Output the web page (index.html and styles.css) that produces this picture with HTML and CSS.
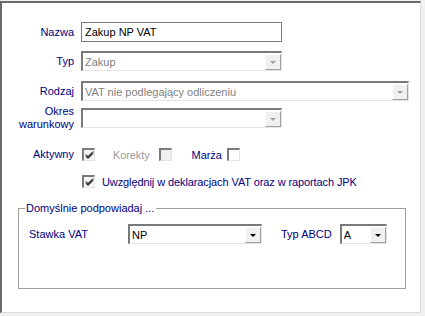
FILE: index.html
```html
<!DOCTYPE html>
<html lang="pl">
<head>
  <meta charset="UTF-8" />
  <title>Rejestr VAT</title>
  <link rel="stylesheet" href="styles.css">
</head>
<body>
  <div class="panel">
    <div class="row first">
      <label class="label">Nazwa</label>
      <div class="edit w-short">Zakup NP VAT</div>
    </div>

    <div class="row r-typ">
      <label class="label">Typ</label>
      <div class="combo w-short disabled">
        <span class="value">Zakup</span>
        <span class="drop"><i class="arrow"></i></span>
      </div>
    </div>

    <div class="row r-rodzaj">
      <label class="label">Rodzaj</label>
      <div class="combo w-long disabled">
        <span class="value">VAT nie podlegający odliczeniu</span>
        <span class="drop"><i class="arrow"></i></span>
      </div>
    </div>

    <div class="row r-okres">
      <label class="label two-line">Okres<br>warunkowy</label>
      <div class="combo w-short disabled">
        <span class="value"></span>
        <span class="drop"><i class="arrow"></i></span>
      </div>
    </div>

    <div class="row checks">
      <label class="label">Aktywny</label>
      <span class="check on"><svg width="9" height="9" viewBox="0 0 9 9"><path d="M1 3.5 L3 5.5 L8 0.5 M1 4.5 L3 6.5 L8 1.5 M1 5.5 L3 7.5 L8 2.5" stroke="#000" fill="none"/></svg></span>
      <span class="opt grey">Korekty</span>
      <span class="check off-disabled"></span>
      <span class="opt marza">Marża</span>
      <span class="check"></span>
    </div>

    <div class="row jpk">
      <span class="check on"><svg width="9" height="9" viewBox="0 0 9 9"><path d="M1 3.5 L3 5.5 L8 0.5 M1 4.5 L3 6.5 L8 1.5 M1 5.5 L3 7.5 L8 2.5" stroke="#000" fill="none"/></svg></span>
      <span class="opt">Uwzględnij w deklaracjach VAT oraz w raportach JPK</span>
    </div>

    <fieldset class="group">
      <legend>Domyślnie podpowiadaj ...</legend>
      <div class="group-row">
        <span class="g-label">Stawka VAT</span>
        <div class="combo w-stawka">
          <span class="value">NP</span>
          <span class="drop"><i class="arrow"></i></span>
        </div>
        <span class="g-label abcd">Typ ABCD</span>
        <div class="combo w-abcd">
          <span class="value">A</span>
          <span class="drop"><i class="arrow"></i></span>
        </div>
      </div>
    </fieldset>
  </div>
</body>
</html>
```

FILE: styles.css
```css
body, html {
  margin: 0;
  padding: 0;
  background: #f0f0f0;
  font-family: "Liberation Sans", Arial, sans-serif;
  font-size: 11px;
}

.panel {
  margin-top: 1px;
  width: 421px;
  height: 312px;
  box-sizing: border-box;
  background: #fff;
  border-style: solid;
  border-width: 2px 1px 1px 2px;
  border-color: #6a6a6a #dcdcdc #dcdcdc #6a6a6a;
}

.row {
  display: flex;
  align-items: center;
  height: 20px;
}
.first { margin-top: 19px; }
.r-typ { margin-top: 9px; }
.r-rodzaj { margin-top: 10px; }
.r-okres { margin-top: 7px; }
.checks { margin-top: 20px; height: 13px; }
.jpk { margin-top: 14px; height: 13px; padding-left: 80px; }

.label {
  width: 72px;
  margin-right: 7px;
  text-align: right;
  color: #000080;
  line-height: 13px;
}

.edit, .combo {
  box-sizing: border-box;
  height: 20px;
  background: #fff;
  border-style: solid;
  border-width: 2px 1px 1px 2px;
  border-color: #7a7a7a #e3e3e3 #e3e3e3 #7a7a7a;
  color: #000;
  line-height: 16px;
  font-size: 11px;
}
.edit {
  border-width: 1px;
  border-color: #7a7a7a;
  padding-left: 3px;
  line-height: 18px;
}

.combo {
  display: flex;
  align-items: center;
  padding: 0;
}
.combo .value {
  flex: 1;
  padding-left: 2px;
  white-space: nowrap;
  overflow: hidden;
}
.combo.disabled .value { color: #7f7f7f; }

.drop {
  width: 16px;
  height: 16px;
  box-sizing: border-box;
  background: #f0f0f0;
  border-style: solid;
  border-width: 1px;
  border-color: #fff #a0a0a0 #a0a0a0 #fff;
  display: flex;
  align-items: center;
  justify-content: center;
}
.arrow {
  width: 0;
  height: 0;
  border-left: 3px solid transparent;
  border-right: 3px solid transparent;
  border-top: 3px solid #000;
  margin-top: 1px;
}
.disabled .arrow { border-top-color: #a0a0a0; }

.w-short { width: 201px; }
.w-long { width: 328px; }
.w-stawka { width: 134px; }
.w-abcd { width: 47px; }

.check {
  box-sizing: border-box;
  width: 13px;
  height: 13px;
  background: #fff;
  border-style: solid;
  border-width: 2px 1px 1px 2px;
  border-color: #7a7a7a #e3e3e3 #e3e3e3 #7a7a7a;
  display: flex;
  align-items: center;
  justify-content: center;
}
.check.on { background: #f4f4f4; }
.check svg { display: block; }
.off-disabled { background: #f0f0f0; }
.checks .check { margin-left: 1px; }

.opt {
  color: #000080;
  margin-left: 7px;
  letter-spacing: -0.1px;
}
.opt.grey {
  color: #9a9a9a;
  margin-left: 18px;
  margin-right: 8px;
}
.opt.marza {
  margin-left: 20px;
  margin-right: 4px;
}

.group {
  margin: 14px 0 0 16px;
  padding: 0;
  width: 388px;
  height: 87px;
  box-sizing: border-box;
  border: 1px solid #a0a0a0;
  min-width: 0;
}
.group legend {
  margin-left: 6px;
  padding: 0 2px 0 1px;
  color: #000080;
  line-height: 12px;
}

.group-row {
  display: flex;
  align-items: center;
  margin-top: 10px;
  padding-left: 10px;
}
.g-label {
  color: #000080;
  width: 99px;
}
.g-label.abcd {
  width: auto;
  margin-left: 19px;
  margin-right: 8px;
}
```
